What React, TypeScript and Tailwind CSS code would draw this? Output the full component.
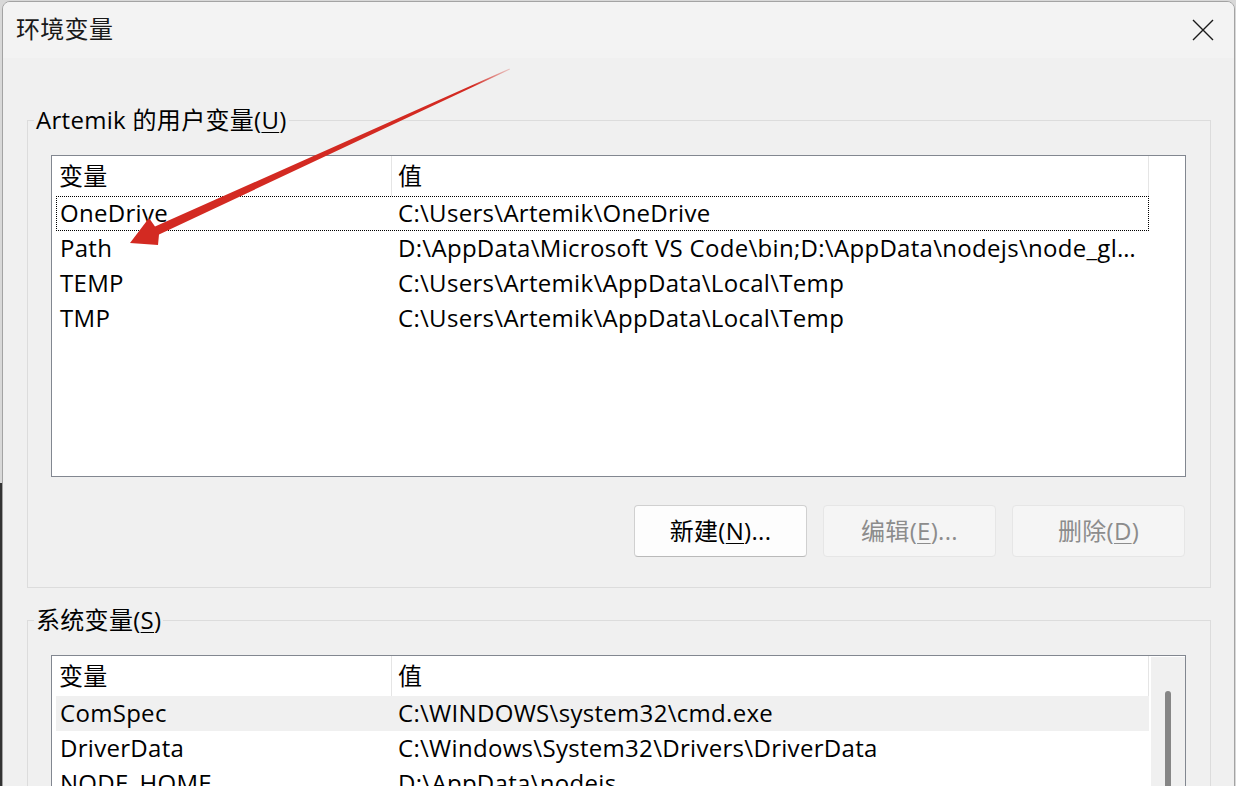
import React from "react";

const FONT = "font-['Open_Sans','Noto_Sans_CJK_SC',sans-serif]";

type Row = { name: string; value: string };

const USER_ROWS: Row[] = [
  { name: "OneDrive", value: "C:\\Users\\Artemik\\OneDrive" },
  {
    name: "Path",
    value:
      "D:\\AppData\\Microsoft VS Code\\bin;D:\\AppData\\nodejs\\node_global;D:\\AppData\\nodejs",
  },
  { name: "TEMP", value: "C:\\Users\\Artemik\\AppData\\Local\\Temp" },
  { name: "TMP", value: "C:\\Users\\Artemik\\AppData\\Local\\Temp" },
];

const SYSTEM_ROWS: Row[] = [
  { name: "ComSpec", value: "C:\\WINDOWS\\system32\\cmd.exe" },
  { name: "DriverData", value: "C:\\Windows\\System32\\Drivers\\DriverData" },
  { name: "NODE_HOME", value: "D:\\AppData\\nodejs" },
  { name: "NUMBER_OF_PROCESSORS", value: "16" },
];

function Mnemonic({ label, letter, tail }: { label: string; letter: string; tail: string }) {
  return (
    <>
      {label}(<span className="underline underline-offset-[3px] decoration-1">{letter}</span>){tail}
    </>
  );
}

function ListBox({
  rows,
  focused,
  selected,
  scrollbar,
}: {
  rows: Row[];
  focused?: number;
  selected?: number;
  scrollbar?: boolean;
}) {
  return (
    <div className="w-[1135px] h-[322px] border border-[#828790] bg-white flex">
      <div className="flex-1 min-w-0">
        <div className="flex h-[40px]">
          <div className="w-[340px] pl-[7px] border-r border-[#e5e5e5] flex items-center">变量</div>
          <div className="w-[757px] pl-[6px] border-r border-[#e5e5e5] flex items-center">值</div>
        </div>
        {rows.map((row, i) => (
          <div
            key={row.name}
            className={
              "ml-[4px] w-[1093px] h-[35px] pb-[2px] flex items-center border border-dotted leading-[32px] " +
              (focused === i ? "border-black " : "border-transparent ") +
              (selected === i ? "bg-[#f0f0f0]" : "")
            }
          >
            <div className="w-[335px] pl-[3px] shrink-0 whitespace-nowrap">{row.name}</div>
            <div className="flex-1 min-w-0 pl-[6px] pr-[12px] truncate">{row.value}</div>
          </div>
        ))}
      </div>
      {scrollbar && (
        <div className="w-[34px] mt-[1px] bg-[#f0f0f0] flex justify-center pt-[34px]">
          <div className="w-[6px] h-[400px] rounded-t-full bg-[#868686]" />
        </div>
      )}
    </div>
  );
}

function Button({ children, disabled }: { children: React.ReactNode; disabled?: boolean }) {
  return (
    <button
      type="button"
      className={
        "w-[173px] h-[52px] rounded-[4px] border flex items-center justify-center " +
        (disabled
          ? "bg-[#f5f5f5] border-[#e6e6e6] text-[#8c8c8c]"
          : "bg-[#fdfdfd] border-[#d0d0d0] border-b-[#bababa] text-black")
      }
    >
      {children}
    </button>
  );
}

function Arrow() {
  return (
    <svg className="absolute left-0 top-0 pointer-events-none" width="1236" height="786">
      <defs>
        <linearGradient id="fade" x1="130" y1="243" x2="510" y2="68" gradientUnits="userSpaceOnUse">
          <stop offset="0" stopColor="#d32a22" />
          <stop offset="0.9" stopColor="#d32a22" />
          <stop offset="1" stopColor="#d32a22" stopOpacity="0.2" />
        </linearGradient>
      </defs>
      <polygon
        points="130,243 149,218 155,226.5 509.5,68.5 510,69.5 159,234.5 158,245"
        fill="url(#fade)"
      />
    </svg>
  );
}

export default function App() {
  return (
    <div className={`relative w-[1236px] h-[786px] overflow-hidden bg-[#d8d8d8] text-[24px] leading-none tracking-[0.3px] text-black ${FONT}`}>
      <div className="absolute left-0 top-[483px] w-[2px] h-[303px] bg-[#333333]" />
      <div className="ml-[2px] mt-[1px] w-[1233px] h-[800px] border border-[#a3a3a3] rounded-tl-[8px] rounded-tr-[8px] bg-[#f0f0f0] overflow-hidden">
        <div className="h-[56px] bg-[#f3f3f3] flex items-center justify-between pl-[13px] pr-[20px]">
          <span className="text-[24px] text-[#1a1a1a] -mt-[2px]">环境变量</span>
          <svg width="22" height="22" viewBox="0 0 22 22" className="-mt-[1px]">
            <path d="M1 1 L21 21 M21 1 L1 21" stroke="#1a1a1a" strokeWidth="1.4" />
          </svg>
        </div>

        <fieldset className="ml-[24px] mt-[48px] w-[1184px] border border-[#dcdcdc]">
          <legend className="ml-[6px] px-[2px] h-[28px] leading-[28px]">
            Artemik 的用户变量(<span className="underline underline-offset-[3px] decoration-1">U</span>)
          </legend>
          <div className="pl-[23px] pt-[21px] pb-[30px]">
            <ListBox rows={USER_ROWS} focused={0} />
            <div className="flex justify-end gap-[16px] mt-[28px] pr-[25px]">
              <Button>
                <Mnemonic label="新建" letter="N" tail="..." />
              </Button>
              <Button disabled>
                <Mnemonic label="编辑" letter="E" tail="..." />
              </Button>
              <Button disabled>
                <Mnemonic label="删除" letter="D" tail="" />
              </Button>
            </div>
          </div>
        </fieldset>

        <fieldset className="ml-[24px] mt-[18px] w-[1184px] border border-[#dcdcdc]">
          <legend className="ml-[6px] px-[2px] h-[28px] leading-[28px]">
            系统变量(<span className="underline underline-offset-[3px] decoration-1">S</span>)
          </legend>
          <div className="pl-[23px] pt-[21px] pb-[30px]">
            <ListBox rows={SYSTEM_ROWS} selected={0} scrollbar />
          </div>
        </fieldset>
      </div>
      <Arrow />
    </div>
  );
}
